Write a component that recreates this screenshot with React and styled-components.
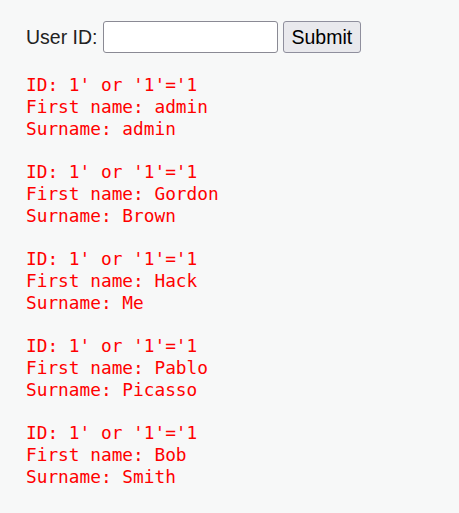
import styled, { createGlobalStyle } from "styled-components"

const GlobalStyle = createGlobalStyle`
  body {
    margin: 0;
    background: #f7f8f8;
  }
`

const Page = styled.div`
  display: flex;
  flex-direction: column;
  padding: 21px 26px;
`

const Form = styled.form`
  display: flex;
  flex-direction: row;
  align-items: center;
  gap: 5px;
  font-family: "Liberation Sans", Arial, sans-serif;
  font-size: 19.5px;
  color: #222;
`

const Input = styled.input`
  width: 175px;
  height: 32px;
  box-sizing: border-box;
  border: 1px solid #8a8a94;
  border-radius: 3px;
  background: #fff;
  font-size: 19.5px;
`

const Button = styled.button`
  height: 32px;
  box-sizing: border-box;
  padding: 0 8px;
  border: 1px solid #8f8f9d;
  border-radius: 3px;
  background: #e9e9ed;
  font-family: "Liberation Sans", Arial, sans-serif;
  font-size: 19.5px;
  color: #000;
`

const Result = styled.pre`
  margin: 21px 0 0;
  font-family: "DejaVu Sans Mono", "Liberation Mono", monospace;
  font-size: 17.8px;
  line-height: 22px;
  color: #ff0000;
`

const users = [
  ["admin", "admin"],
  ["Gordon", "Brown"],
  ["Hack", "Me"],
  ["Pablo", "Picasso"],
  ["Bob", "Smith"]
]

function App() {
  return (
    <Page>
      <GlobalStyle/>
      <Form onSubmit={(event) => event.preventDefault()}>
        <label htmlFor="id">User ID:</label>
        <Input id="id" name="id" type="text"/>
        <Button type="submit">Submit</Button>
      </Form>
      { users.map(([ first, last ], i) => (
        <Result key={i}>{`ID: 1' or '1'='1\nFirst name: ${first}\nSurname: ${last}`}</Result>
      )) }
    </Page>
  )
}

export default App
